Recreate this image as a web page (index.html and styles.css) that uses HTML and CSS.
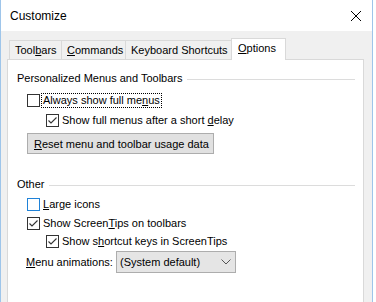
FILE: index.html
```html
<!DOCTYPE html>
<html lang="en">
<head>
    <meta charset="UTF-8">
    <title>Customize</title>
    <link rel="stylesheet" href="styles.css">
</head>
<body>
    <div class="window">
        <div class="titlebar">
            <span class="title">Customize</span>
            <svg class="close" width="12" height="12" viewBox="0 0 12 12">
                <path d="M1 1 L11 11 M11 1 L1 11" stroke="#000" stroke-width="1" fill="none"/>
            </svg>
        </div>
        <div class="body">
            <div class="tabs">
                <div class="tab tab-toolbars">Tool<u>b</u>ars</div>
                <div class="tab tab-commands"><u>C</u>ommands</div>
                <div class="tab tab-keyboard">Keyboard Shortcuts</div>
                <div class="tab tab-options active"><u>O</u>ptions</div>
            </div>
            <div class="panel">
                <div class="group-head">
                    <span>Personalized Menus and Toolbars</span>
                    <div class="rule"></div>
                </div>
                <div class="check-row row-always">
                    <span class="box"></span>
                    <span class="label focused">Always show full me<u>n</u>us</span>
                </div>
                <div class="check-row sub row-delay">
                    <span class="box checked">
                        <svg width="11" height="11" viewBox="0 0 11 11"><path d="M1.5 5.5 L4 8 L9.5 2.5" stroke="#333" stroke-width="1.1" fill="none"/></svg>
                    </span>
                    <span class="label">Show full menus after a short <u>d</u>elay</span>
                </div>
                <button class="btn"><u>R</u>eset menu and toolbar usage data</button>

                <div class="group-head other">
                    <span>Other</span>
                    <div class="rule"></div>
                </div>
                <div class="check-row row-large">
                    <span class="box hover"></span>
                    <span class="label"><u>L</u>arge icons</span>
                </div>
                <div class="check-row row-tips">
                    <span class="box checked">
                        <svg width="11" height="11" viewBox="0 0 11 11"><path d="M1.5 5.5 L4 8 L9.5 2.5" stroke="#333" stroke-width="1.1" fill="none"/></svg>
                    </span>
                    <span class="label">Show Screen<u>T</u>ips on toolbars</span>
                </div>
                <div class="check-row sub">
                    <span class="box checked">
                        <svg width="11" height="11" viewBox="0 0 11 11"><path d="M1.5 5.5 L4 8 L9.5 2.5" stroke="#333" stroke-width="1.1" fill="none"/></svg>
                    </span>
                    <span class="label">Show s<u>h</u>ortcut keys in ScreenTips</span>
                </div>
                <div class="select-row">
                    <span class="select-label"><u>M</u>enu animations:</span>
                    <div class="select">
                        <span>(System default)</span>
                        <svg width="10" height="6" viewBox="0 0 10 6"><path d="M0.5 0.5 L5 5 L9.5 0.5" stroke="#555" stroke-width="1" fill="none"/></svg>
                    </div>
                </div>
            </div>
        </div>
    </div>
</body>
</html>
```

FILE: styles.css
```css
body {
    margin: 0;
    padding: 0;
    background: #fff;
    font-family: 'Liberation Sans', Arial, sans-serif;
    font-size: 11px;
    color: #000;
}

u {
    text-decoration: underline;
    text-underline-offset: 1px;
}

.window {
    width: 371px;
    height: 302px;
    border-left: 1px solid #9ec5ea;
    border-right: 1px solid #9ec5ea;
    background: #f0f0f0;
    overflow: hidden;
}

.titlebar {
    height: 31px;
    background: #fff;
    display: flex;
    align-items: center;
    justify-content: space-between;
    padding: 0 10px 0 9px;
}

.title {
    font-size: 12px;
    margin-top: 1px;
}

.body {
    padding: 7px 8px 0 6px;
}

.tabs {
    display: flex;
    align-items: flex-end;
    padding-left: 2px;
    height: 21px;
    position: relative;
    z-index: 1;
    white-space: nowrap;
}

.tab {
    height: 19px;
    box-sizing: border-box;
    border: 1px solid #d9d9d9;
    border-bottom: none;
    background: #f0f0f0;
    margin-left: -1px;
    padding-left: 5px;
    line-height: 18px;
}

.tab:first-child {
    margin-left: 0;
}

.tab-toolbars { width: 53px; }
.tab-commands { width: 65px; }
.tab-keyboard { width: 109px; }
.tab-options { width: 51px; }

.tab.active {
    height: 22px;
    width: 55px;
    margin: 0 -2px -1px -3px;
    background: #fff;
    padding-left: 6px;
    line-height: 19px;
}

.panel {
    border: 1px solid #d9d9d9;
    background: #fff;
    height: 260px;
    padding: 10px 8px 0 9px;
    white-space: nowrap;
}

.group-head {
    display: flex;
    align-items: center;
    gap: 4px;
    height: 16px;
}

.group-head .rule {
    flex: 1;
    height: 1px;
    background: #dcdcdc;
    margin-top: 2px;
}

.group-head.other {
    margin-top: 22px;
}

.check-row {
    display: flex;
    align-items: center;
    height: 18px;
    margin-left: 10px;
}

.check-row.sub {
    margin-left: 29px;
}

.row-always { margin-top: 5px; }
.row-delay { margin-top: 2px; }
.row-large { margin-top: 3px; }
.row-tips { margin-top: 1px; }

.box {
    width: 13px;
    height: 13px;
    box-sizing: border-box;
    border: 1px solid #333;
    background: #fff;
    display: flex;
    align-items: center;
    justify-content: center;
    flex-shrink: 0;
}

.box.hover {
    border-color: #1f82d8;
}

.label {
    margin-left: 1px;
    padding: 0 1px;
    line-height: 13px;
    border: 1px dotted transparent;
}

.label.focused {
    border-color: #000;
}

.btn {
    display: block;
    margin: 4px 0 0 10px;
    height: 21px;
    width: 187px;
    font-family: inherit;
    font-size: 11px;
    color: #000;
    background: #e1e1e1;
    border: 1px solid #adadad;
    text-align: left;
    padding: 0 0 0 6px;
}

.select-row {
    display: flex;
    align-items: center;
    margin: 1px 0 0 9px;
}

.select-label {
    width: 90px;
}

.select {
    width: 120px;
    height: 22px;
    box-sizing: border-box;
    border: 1px solid #adadad;
    background: #e5e5e5;
    display: flex;
    align-items: center;
    justify-content: space-between;
    padding: 0 4px 0 3px;
}
```
